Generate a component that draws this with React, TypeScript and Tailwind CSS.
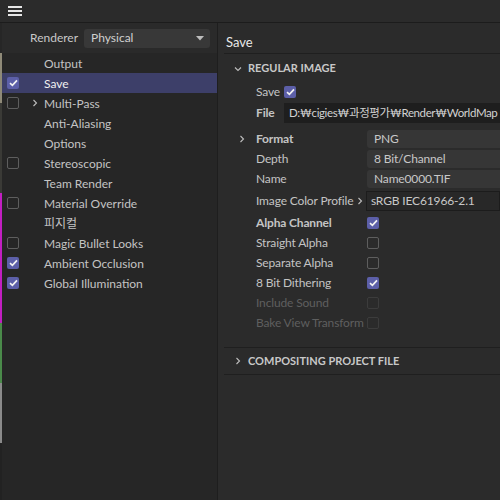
import React from "react";

const font = { fontFamily: 'Lato, "Noto Sans CJK KR", sans-serif' };

function Check({ on, dim }: { on?: boolean; dim?: boolean }) {
  if (on) {
    return (
      <span className="flex h-[12px] w-[12px] shrink-0 items-center justify-center rounded-[2px] bg-[#5c5fa8]">
        <svg width="9" height="8" viewBox="0 0 9 8">
          <path d="M1 4.2 L3.4 6.4 L8 1.4" stroke="#f2f2f2" strokeWidth="1.7" fill="none" />
        </svg>
      </span>
    );
  }
  return (
    <span
      className={
        dim
          ? "block h-[12px] w-[12px] shrink-0 rounded-[2px] border-[1.5px] border-[#3c3c3c]"
          : "block h-[12px] w-[12px] shrink-0 rounded-[2px] border-[1.5px] border-[#5e5e5e]"
      }
    />
  );
}

function Chevron({ down }: { down?: boolean }) {
  return (
    <svg width="8" height="8" viewBox="0 0 8 8" className="shrink-0">
      {down ? (
        <path d="M1 2.5 L4 5.5 L7 2.5" stroke="#bdbdbd" strokeWidth="1.1" fill="none" />
      ) : (
        <path d="M2.5 1 L5.5 4 L2.5 7" stroke="#bdbdbd" strokeWidth="1.1" fill="none" />
      )}
    </svg>
  );
}

const sideItems: Array<{ label: string; check?: "on" | "off"; arrow?: boolean; active?: boolean }> = [
  { label: "Output" },
  { label: "Save", check: "on", active: true },
  { label: "Multi-Pass", check: "off", arrow: true },
  { label: "Anti-Aliasing" },
  { label: "Options" },
  { label: "Stereoscopic", check: "off" },
  { label: "Team Render" },
  { label: "Material Override", check: "off" },
  { label: "피지컬" },
  { label: "Magic Bullet Looks", check: "off" },
  { label: "Ambient Occlusion", check: "on" },
  { label: "Global Illumination", check: "on" },
];

function Field({ children, bordered }: { children: React.ReactNode; bordered?: boolean }) {
  return (
    <div
      className={
        bordered
          ? "flex h-[20px] min-w-0 flex-1 items-center overflow-hidden whitespace-nowrap border border-[#1c1c1c] bg-[#282828] pl-[4px] text-[#c8c8c8]"
          : "flex h-[18px] min-w-0 flex-1 items-center overflow-hidden whitespace-nowrap rounded-l-[3px] bg-[#363636] pl-[7px] text-[#c8c8c8]"
      }
    >
      {children}
    </div>
  );
}

function Row({ label, children, cls }: { label: React.ReactNode; children?: React.ReactNode; cls?: string }) {
  return (
    <div className={"flex h-[20px] items-center pl-[32px] " + (cls ?? "")}>
      <span className="w-[111px] shrink-0 whitespace-nowrap">{label}</span>
      {children}
    </div>
  );
}

export default function App() {
  return (
    <div className="flex h-[500px] w-[500px] flex-col overflow-hidden bg-[#262626] text-[12px]" style={font}>
      <div className="flex h-[23px] shrink-0 items-center border-b border-[#1c1c1c] bg-[#2b2b2b] pl-[8px]">
        <div className="flex flex-col gap-[2px]">
          <span className="block h-[2px] w-[14px] bg-[#e6e6e6]" />
          <span className="block h-[2px] w-[14px] bg-[#e6e6e6]" />
          <span className="block h-[2px] w-[14px] bg-[#e6e6e6]" />
        </div>
      </div>

      <div className="flex min-h-0 flex-1">
        <div className="flex w-[2px] shrink-0 flex-col">
          <div className="h-[30px] bg-[#262626]" />
          <div className="h-[50px] bg-[#8f8a78]" />
          <div className="h-[90px] bg-[#3a3a36]" />
          <div className="h-[130px] bg-[#c21fc2]" />
          <div className="h-[60px] bg-[#4a8a4a]" />
          <div className="h-[60px] bg-[#8a8a8a]" />
          <div className="flex-1 bg-[#222]" />
        </div>

        <div className="flex w-[216px] shrink-0 flex-col border-r border-[#1e1e1e] bg-[#262626]">
          <div className="flex h-[30px] items-center bg-[#2a2a2a] pl-[28px]">
            <span className="text-[#c8c8c8]">Renderer</span>
            <div className="ml-[6px] flex h-[19px] w-[126px] items-center justify-between rounded-[3px] bg-[#383838] pl-[7px] pr-[6px] text-[#d0d0d0]">
              <span>Physical</span>
              <svg width="8" height="5" viewBox="0 0 8 5">
                <path d="M0 0 L8 0 L4 4.5 Z" fill="#bdbdbd" />
              </svg>
            </div>
          </div>
          <div className="flex flex-col">
            {sideItems.map((it) => (
              <div
                key={it.label}
                className={
                  it.active
                    ? "flex h-[20px] items-center bg-[#3d3f69] text-[#f0f0f0]"
                    : "flex h-[20px] items-center text-[#c4c4c4]"
                }
              >
                <div className="flex w-[29px] justify-start pl-[5px]">
                  {it.check ? <Check on={it.check === "on"} /> : null}
                </div>
                <div className="flex w-[13px] justify-start">{it.arrow ? <Chevron /> : null}</div>
                <span className="pt-[1px]">{it.label}</span>
              </div>
            ))}
          </div>
        </div>

        <div className="flex min-w-0 flex-1 flex-col bg-[#2b2b2b] pl-[6px] tracking-[-0.15px] text-[#c4c4c4]">
          <div className="flex h-[31px] shrink-0 items-end border-b border-[#1f1f1f] pb-[1px] pl-[2px] text-[13px] tracking-normal text-[#e8e8e8]">
            Save
          </div>

          <div className="flex h-[28px] items-center pl-[10px] pt-[1px]">
            <Chevron down />
            <span className="ml-[6px] text-[11px] font-bold tracking-normal text-[#c8c8c8]">REGULAR IMAGE</span>
          </div>

          <div className="flex flex-col pl-[32px]">
            <div className="flex h-[20px] items-center">
              <span className="w-[28px]">Save</span>
              <Check on />
            </div>
            <div className="flex h-[21px] items-center">
              <span className="w-[28px] shrink-0 font-bold">File</span>
              <div className="flex h-[20px] min-w-0 flex-1 items-center overflow-hidden whitespace-nowrap bg-[#1e1e1e] pl-[5px] text-[11.5px] tracking-[-0.4px] text-[#d2d2d2]">
                D:₩cigies₩과정평가₩Render₩WorldMap
              </div>
            </div>
          </div>

          <div className="mt-[6px] flex flex-col">
            <div className="flex h-[20px] items-center">
              <div className="flex w-[32px] justify-center pl-[4px]">
                <Chevron />
              </div>
              <span className="w-[111px] shrink-0 font-bold">Format</span>
              <Field>PNG</Field>
            </div>
            <Row label="Depth">
              <Field>8 Bit/Channel</Field>
            </Row>
            <Row label="Name">
              <Field>Name0000.TIF</Field>
            </Row>
            <div className="mt-[2px] flex h-[20px] items-center pl-[32px]">
              <span className="flex w-[110px] shrink-0 items-center justify-between whitespace-nowrap pr-[2px]">
                Image Color Profile
                <Chevron />
              </span>
              <Field bordered>sRGB IEC61966-2.1</Field>
            </div>
            <Row label={<b>Alpha Channel</b>} cls="mt-[2px]">
              <Check on />
            </Row>
            <Row label="Straight Alpha">
              <Check />
            </Row>
            <Row label="Separate Alpha">
              <Check />
            </Row>
            <Row label="8 Bit Dithering">
              <Check on />
            </Row>
            <Row label="Include Sound" cls="text-[#5f5f5f]">
              <Check dim />
            </Row>
            <Row label="Bake View Transform" cls="text-[#5f5f5f]">
              <Check dim />
            </Row>
          </div>

          <div className="mt-[14px] flex h-[28px] items-center border-y border-[#1f1f1f] pl-[10px]">
            <Chevron />
            <span className="ml-[6px] text-[11px] font-bold tracking-normal text-[#c8c8c8]">COMPOSITING PROJECT FILE</span>
          </div>
        </div>
      </div>
    </div>
  );
}
